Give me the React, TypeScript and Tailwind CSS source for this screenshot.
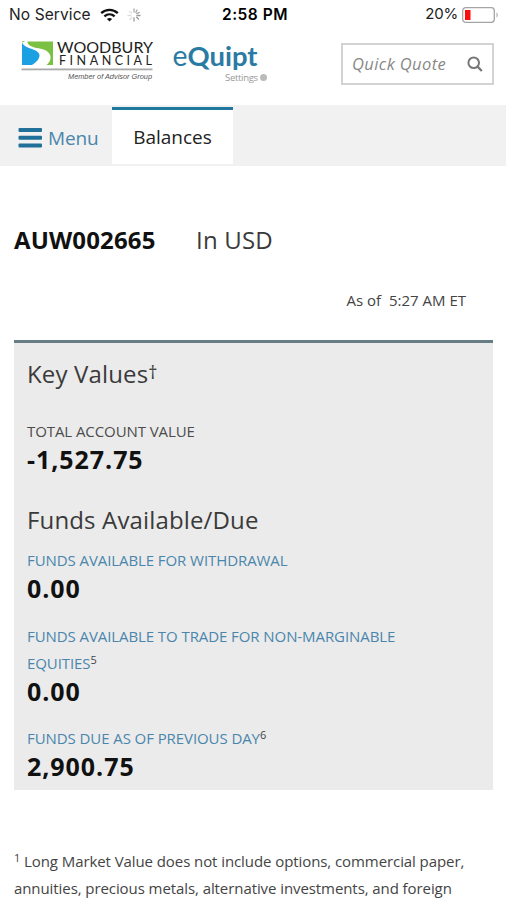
import type { ReactNode } from "react";

interface BalanceRowProps {
  label: ReactNode;
  value: string;
  link?: boolean;
  className?: string;
}

const Sup = ({ children }: { children: ReactNode }) => (
  <span className="relative -top-[5px] text-[11px] leading-none text-[#444]">{children}</span>
);

const BalanceRow = ({ label, value, link = true, className = "" }: BalanceRowProps) => (
  <div className={className}>
    <div
      className={`text-[15px] leading-[27px] tracking-[-0.08px] ${link ? "text-[#4a86ab]" : "text-[#4c4c4c]"}`}
    >
      {label}
    </div>
    <div className="-mt-px text-[25px] font-bold leading-[30px] tracking-[0.95px] text-[#111]">{value}</div>
  </div>
);

const StatusBar = () => (
  <div className="relative flex h-7 items-center justify-between pl-[9px] pr-[7px] pt-px font-['Inter',sans-serif] text-[15.5px] text-[#222]">
    <div className="flex items-center">
      <span className="w-[82px] whitespace-nowrap tracking-[0.1px]">No Service</span>
      <svg className="ml-[9px]" width="19" height="14" viewBox="0 0 19 14" fill="none" stroke="#111" strokeWidth="2.4">
        <path d="M1.2 5.2C6 .8 13 .8 17.8 5.2" />
        <path d="M4.4 8.4c3-2.7 7.2-2.7 10.2 0" />
        <path d="M9.5 13.6 6.9 11c1.5-1.3 3.7-1.3 5.2 0z" fill="#111" stroke="none" />
      </svg>
      <svg className="ml-[8px]" width="14" height="14" viewBox="0 0 14 14" strokeWidth="1.3" strokeLinecap="round">
        <path d="M7 1v3M10 2 8.8 4.4M12.3 4.4 9.8 5.6" stroke="#aaa" />
        <path d="M13 7.5h-3M11.5 11 9.6 9.2M7 13v-3" stroke="#999" />
        <path d="M3 11.5 4.8 9.4M1 7.5h3M2.5 3.5l2 1.6" stroke="#ddd" />
      </svg>
    </div>
    <span className="absolute left-[222px] text-[15.5px] font-semibold tracking-[0.5px] text-black">2:58 PM</span>
    <div className="flex items-center">
      <span className="text-[15px] tracking-[-0.2px]">20%</span>
      <svg className="ml-[4px]" width="37" height="16" viewBox="0 0 37 16" fill="none">
        <rect x="0.7" y="0.7" width="31.6" height="14.6" rx="3" stroke="#a5a5a5" strokeWidth="1.3" />
        <rect x="3" y="3" width="5.5" height="10" fill="#fb0d0d" />
        <path d="M34.5 5.5c1.6.6 1.6 4.4 0 5z" fill="#a5a5a5" />
      </svg>
    </div>
  </div>
);

const WoodburyLogo = () => (
  <svg width="134" height="44" viewBox="0 0 134 44" className="overflow-visible font-['Lato',sans-serif]">
    {/* blue river bank on the left, green bank on the right */}
    <path d="M1 3.500C2.500 6.500 4.500 7.500 8 9c6 2.200 10.500 3.500 10.500 7.500 0 3.500-3.500 7-7.500 9.500H1z" fill="#1ba1e2" />
    <path d="M6.500 2.500H32V26h-6.500c3-2.500 4.500-5.500 4-8.500-.8-5-6-7.200-12-8.200C12 8.400 6 6.500 6.500 2.500z" fill="#7ac143" />
    <path d="M1 2.500h2.500" stroke="#7ac143" strokeWidth="0.8" />
    <text x="36" y="13.500" fontSize="15.500" fill="#222" textLength="96" lengthAdjust="spacingAndGlyphs">
      WOODBURY
    </text>
    <text x="38" y="26" fontSize="12.500" fill="#222" textLength="93" lengthAdjust="spacing">
      FINANCIAL
    </text>
    <rect x="0.500" y="29.500" width="131" height="1.800" fill="#aaa" />
    <text
      x="47"
      y="39.500"
      fontSize="7.500"
      fontStyle="italic"
      fill="#555"
      textLength="84"
      lengthAdjust="spacingAndGlyphs"
      className="font-['Liberation_Sans',sans-serif]"
    >
      Member of Advisor Group
    </text>
  </svg>
);

const EquiptLogo = () => (
  <div className="flex w-[96px] flex-col">
    <svg width="90" height="33" viewBox="0 0 90 33" className="overflow-visible font-['Lato',sans-serif]" fill="#2a7ba3">
      <text x="1.500" y="25.500" fontSize="28" textLength="15" lengthAdjust="spacingAndGlyphs">
        e
      </text>
      <text x="16.500" y="25.500" fontSize="26" fontWeight="bold" textLength="70" lengthAdjust="spacingAndGlyphs">
        Quipt
      </text>
    </svg>
    <div className="-mt-px flex items-center gap-[2px] pl-[54px] text-[9.500px] leading-[11px] tracking-[-0.3px] text-[#999]">
      <span>Settings</span>
      <span className="size-[7px] shrink-0 rounded-full bg-[#bbb]" />
    </div>
  </div>
);

const Header = () => (
  <div className="flex h-[77px] items-start pl-[21px]">
    <div className="mt-[11px]">
      <WoodburyLogo />
    </div>
    <div className="ml-[16px] mt-[12px]">
      <EquiptLogo />
    </div>
    <div className="ml-auto mr-[12px] mt-[15px] flex h-[42px] w-[153px] items-center justify-between border-2 border-[#d3d3d3] pl-[9px] pr-[9px]">
      <span className="whitespace-nowrap text-[16.500px] italic tracking-[0.4px] text-[#888]">Quick Quote</span>
      <svg width="16" height="16" viewBox="0 0 16 16" fill="none" stroke="#777" strokeWidth="2">
        <circle cx="6.700" cy="6.700" r="5.300" />
        <path d="m10.500 10.500 4.300 4.500" strokeWidth="2.300" />
      </svg>
    </div>
  </div>
);

const NavTabs = () => (
  <div className="flex h-[61px] bg-[#f1f1f1] pl-[18px] pt-[2px]">
    <div className="flex h-[59px] w-[94px] items-center pt-[3px]">
      <svg width="24" height="20" viewBox="0 0 24 20" fill="#20709a">
        <rect x="0.500" y="0" width="23.500" height="4" rx="1" />
        <rect x="0.500" y="7.800" width="23.500" height="4" rx="1" />
        <rect x="0.500" y="15.600" width="23.500" height="4" rx="1" />
      </svg>
      <span className="ml-[6px] text-[19px] tracking-[-0.1px] text-[#4a86ab]">Menu</span>
    </div>
    <div className="flex h-[57px] w-[121px] items-center justify-center border-t-[3px] border-[#20789f] bg-white text-[19px] text-[#222]">
      Balances
    </div>
  </div>
);

export default function App() {
  return (
    <div className="h-[900px] w-[506px] overflow-hidden bg-white font-['Open_Sans',sans-serif]">
      <StatusBar />
      <Header />
      <NavTabs />

      <div className="mt-[58px] flex pl-[14px] text-[24px] leading-[32px]">
        <h1 className="w-[182px] font-bold tracking-[0.15px] text-[#111]">AUW002665</h1>
        <span className="tracking-[0.2px] text-[#3a3a3a]">In USD</span>
      </div>
      <div className="mt-[32px] pr-[40px] text-right text-[15px] leading-[24px] text-[#444]">
        As of&nbsp; 5:27 AM ET
      </div>

      <section className="mx-[14px] mt-[28px] h-[450px] w-[479px] border-t-[3px] border-[#677d86] bg-[#ebebeb] px-[13px] pt-[15px]">
        <h2 className="text-[24px] leading-[32px] tracking-[0.15px] text-[#3a3a3a]">
          Key Values<span className="relative -top-[4px] text-[18px] leading-none">†</span>
        </h2>
        <BalanceRow className="mt-[28px]" link={false} label="TOTAL ACCOUNT VALUE" value="-1,527.75" />
        <h2 className="mt-[30px] text-[24px] leading-[32px] tracking-[0.15px] text-[#3a3a3a]">Funds Available/Due</h2>
        <BalanceRow className="mt-[11px]" label="FUNDS AVAILABLE FOR WITHDRAWAL" value="0.00" />
        <BalanceRow
          className="mt-[20px]"
          label={
            <>
              FUNDS AVAILABLE TO TRADE FOR NON-MARGINABLE
              <br />
              EQUITIES<Sup>5</Sup>
            </>
          }
          value="0.00"
        />
        <BalanceRow
          className="mt-[19px]"
          label={
            <>
              FUNDS DUE AS OF PREVIOUS DAY<Sup>6</Sup>
            </>
          }
          value="2,900.75"
        />
      </section>

      <p className="mt-[58px] whitespace-nowrap pl-[14px] text-[15px] leading-[27px] tracking-[-0.08px] text-[#444]">
        <Sup>1</Sup> Long Market Value does not include options, commercial paper,
        <br />
        annuities, precious metals, alternative investments, and foreign
      </p>
    </div>
  );
}
